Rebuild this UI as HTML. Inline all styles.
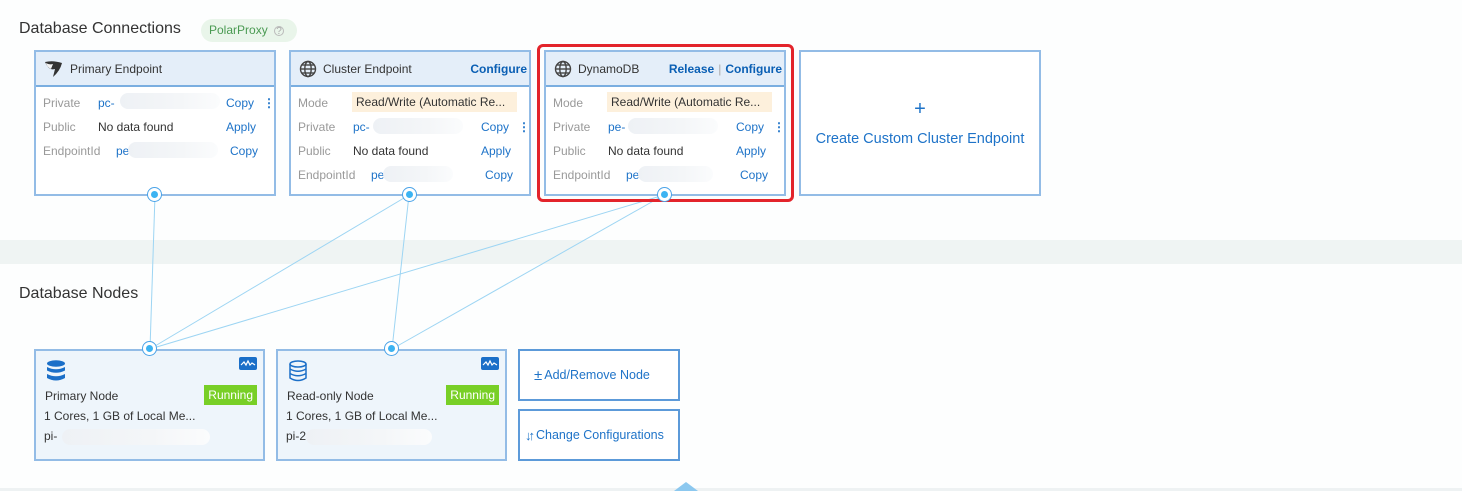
<!DOCTYPE html>
<html><head><meta charset="utf-8"><style>
*{box-sizing:border-box;margin:0;padding:0}
body{width:1462px;height:491px;background:#fdfefe;font-family:"Liberation Sans",sans-serif;font-size:12px;color:#333;position:relative;overflow:hidden}
.abs{position:absolute}
h2{position:absolute;font-weight:normal;font-size:16px;color:#333}
.card{position:absolute;border:2px solid #93bce6;background:#fff}
.hd{height:35px;background:#e4eef9;border-bottom:2px solid #7aaee0;display:flex;align-items:center;padding-left:8px;font-size:12px;color:#333}
.hd .r{margin-left:auto;margin-right:2px;color:#0a5fb4;font-weight:bold}
.row{position:absolute;left:7px;white-space:nowrap;font-size:12px}
.lb{color:#999}
.lk{color:#1e73c8}
.blur{position:absolute;height:16px;border-radius:8px;background:linear-gradient(90deg,#eef1f5,#f4f6f8 60%,#fbfcfd)}
.mode{position:absolute;background:#fdf0dc;height:20px;padding:3px 4px;color:#333}
.dot{position:absolute;width:15px;height:15px;border:1px solid #4aa3e8;border-radius:50%;background:#fff}
.dot:after{content:"";position:absolute;left:3px;top:3px;width:7px;height:7px;border-radius:50%;background:#3cb3f2}
.node{position:absolute;border:2px solid #93bce6;background:#eef5fb;width:231px;height:112px}
.run{position:absolute;right:6px;top:34px;background:#78cf26;color:#fff;padding:3px 4px;font-size:12px}
.mon{position:absolute;right:6px;top:6px;width:18px;height:13px;background:#1b6fc8;border-radius:2px}
.btn{position:absolute;border:2px solid #5c9ad9;background:#fff;color:#1e73c8;font-size:12.5px;display:flex;align-items:center;padding-left:6px}
</style></head><body>
<h2 style="left:19px;top:20px">Database Connections</h2>
<div class="abs" style="left:201px;top:19px;width:96px;height:23px;border-radius:12px;background:#e9f5ea;color:#4a9a52;font-size:12px;padding:4px 8px">PolarProxy <span style="color:#aaa;font-size:10px;border:1px solid #bbb;border-radius:50%;display:inline-block;width:10px;height:10px;line-height:9px;text-align:center;margin-left:3px">?</span></div>
<div class="abs" style="left:0;top:240px;width:1462px;height:24px;background:#eff4f3"></div>
<h2 style="left:19px;top:285px">Database Nodes</h2>
<div class="abs" style="left:0;top:488px;width:1462px;height:3px;background:#eef2f3"></div>
<div class="abs" style="left:674px;top:482px;width:0;height:0;border-left:12px solid transparent;border-right:12px solid transparent;border-bottom:9px solid #8cc8ef"></div>

<svg class="abs" style="left:0;top:0" width="1462" height="491"><g stroke="#9dd5f3" stroke-width="1" fill="none">
<line x1="155" y1="195" x2="150" y2="349"/><line x1="409" y1="195" x2="150" y2="349"/><line x1="409" y1="195" x2="392" y2="349"/><line x1="664" y1="195" x2="150" y2="349"/><line x1="664" y1="195" x2="392" y2="349"/></g></svg>

<!-- primary endpoint -->
<div class="card" style="left:34px;top:50px;width:242px;height:146px">
<div class="hd"><svg width="20" height="18" viewBox="0 0 20 18" style="margin-right:6px"><path d="M1 2 Q9 0 18 3 Q16 11 9 17 L11 9 Q7 10 5 8 Q3 6 1 2Z" fill="#333"/><path d="M2 3 Q5 5 9 4 L7 9 Q3 7 2 3Z" fill="#f4f4f4"/></svg>Primary Endpoint</div>
<div class="row" style="top:44px"><span class="lb">Private</span><span class="lk" style="position:absolute;left:55px">pc-</span><span class="lk" style="position:absolute;left:183px">Copy</span><span class="lk" style="position:absolute;left:220px;font-weight:bold">⋮</span></div>
<div class="blur" style="left:84px;top:41px;width:100px"></div>
<div class="row" style="top:68px"><span class="lb">Public</span><span style="position:absolute;left:55px">No data found</span><span class="lk" style="position:absolute;left:183px">Apply</span></div>
<div class="row" style="top:92px"><span class="lb">EndpointId</span><span class="lk" style="position:absolute;left:73px">pe</span><span class="lk" style="position:absolute;left:187px">Copy</span></div>
<div class="blur" style="left:92px;top:90px;width:90px"></div>
</div>
<!-- cluster -->
<div class="card" style="left:289px;top:50px;width:242px;height:146px">
<div class="hd"><svg width="18" height="18" viewBox="0 0 18 18" style="margin-right:6px" fill="none" stroke="#444" stroke-width="1.4"><circle cx="9" cy="9" r="7.5"/><ellipse cx="9" cy="9" rx="3.2" ry="7.5"/><line x1="1.5" y1="9" x2="16.5" y2="9"/><line x1="3" y1="5" x2="15" y2="5"/><line x1="3" y1="13" x2="15" y2="13"/></svg>Cluster Endpoint<span class="r">Configure</span></div>
<div class="row" style="top:44px"><span class="lb">Mode</span></div>
<div class="mode" style="left:61px;top:40px;width:165px">Read/Write (Automatic Re...</div>
<div class="row" style="top:68px"><span class="lb">Private</span><span class="lk" style="position:absolute;left:55px">pc-</span><span class="lk" style="position:absolute;left:183px">Copy</span><span class="lk" style="position:absolute;left:220px;font-weight:bold">⋮</span></div>
<div class="blur" style="left:82px;top:66px;width:90px"></div>
<div class="row" style="top:92px"><span class="lb">Public</span><span style="position:absolute;left:55px">No data found</span><span class="lk" style="position:absolute;left:183px">Apply</span></div>
<div class="row" style="top:116px"><span class="lb">EndpointId</span><span class="lk" style="position:absolute;left:73px">pe-</span><span class="lk" style="position:absolute;left:187px">Copy</span></div>
<div class="blur" style="left:92px;top:114px;width:70px"></div>
</div>
<!-- dynamo -->
<div class="abs" style="left:537px;top:44px;width:257px;height:158px;border:3px solid #e3242b;border-radius:6px"></div>
<div class="card" style="left:544px;top:50px;width:242px;height:146px">
<div class="hd"><svg width="18" height="18" viewBox="0 0 18 18" style="margin-right:6px" fill="none" stroke="#444" stroke-width="1.4"><circle cx="9" cy="9" r="7.5"/><ellipse cx="9" cy="9" rx="3.2" ry="7.5"/><line x1="1.5" y1="9" x2="16.5" y2="9"/><line x1="3" y1="5" x2="15" y2="5"/><line x1="3" y1="13" x2="15" y2="13"/></svg>DynamoDB<span class="r"><span>Release</span><span style="color:#aaa;font-weight:normal;margin:0 4px">|</span>Configure</span></div>
<div class="row" style="top:44px"><span class="lb">Mode</span></div>
<div class="mode" style="left:61px;top:40px;width:165px">Read/Write (Automatic Re...</div>
<div class="row" style="top:68px"><span class="lb">Private</span><span class="lk" style="position:absolute;left:55px">pe-</span><span class="lk" style="position:absolute;left:183px">Copy</span><span class="lk" style="position:absolute;left:220px;font-weight:bold">⋮</span></div>
<div class="blur" style="left:82px;top:66px;width:90px"></div>
<div class="row" style="top:92px"><span class="lb">Public</span><span style="position:absolute;left:55px">No data found</span><span class="lk" style="position:absolute;left:183px">Apply</span></div>
<div class="row" style="top:116px"><span class="lb">EndpointId</span><span class="lk" style="position:absolute;left:73px">pe-</span><span class="lk" style="position:absolute;left:187px">Copy</span></div>
<div class="blur" style="left:92px;top:114px;width:75px"></div>
</div>
<!-- create -->
<div class="card" style="left:799px;top:50px;width:242px;height:146px;color:#1e73c8;text-align:center">
<div style="margin-top:47px;font-size:20px;line-height:20px">+</div>
<div style="margin-top:12px;font-size:14.5px">Create Custom Cluster Endpoint</div>
</div>
<div class="dot" style="left:147px;top:187px"></div>
<div class="dot" style="left:402px;top:187px"></div>
<div class="dot" style="left:657px;top:187px"></div>

<!-- nodes -->
<div class="node" style="left:34px;top:349px">
<svg class="abs" style="left:10px;top:9px" width="20" height="22" viewBox="0 0 20 22" fill="#1b6fc8"><ellipse cx="10" cy="3.5" rx="9" ry="3.2"/><path d="M1 7 Q10 11.5 19 7 V10.5 Q10 15 1 10.5Z"/><path d="M1 14 Q10 18.5 19 14 V18 Q10 23 1 18Z"/></svg>
<div class="mon"><svg width="18" height="13"><polyline points="2,8 5,5 7,8 9,4 11,8 13,6 16,8" stroke="#fff" fill="none" stroke-width="1.2"/></svg></div>
<div class="run">Running</div>
<div class="abs" style="left:9px;top:38px">Primary Node</div>
<div class="abs" style="left:8px;top:58px">1 Cores, 1 GB of Local Me...</div>
<div class="abs" style="left:8px;top:78px">pi-</div>
<div class="blur" style="left:26px;top:78px;width:148px"></div>
</div>
<div class="node" style="left:276px;top:349px">
<svg class="abs" style="left:10px;top:9px" width="20" height="22" viewBox="0 0 20 22" fill="none" stroke="#1b6fc8" stroke-width="1.5"><ellipse cx="10" cy="4" rx="8" ry="3"/><path d="M2 4 V18 Q10 23 18 18 V4"/><path d="M2 9 Q10 13.5 18 9"/><path d="M2 13.5 Q10 18 18 13.5"/></svg>
<div class="mon"><svg width="18" height="13"><polyline points="2,8 5,5 7,8 9,4 11,8 13,6 16,8" stroke="#fff" fill="none" stroke-width="1.2"/></svg></div>
<div class="run">Running</div>
<div class="abs" style="left:9px;top:38px">Read-only Node</div>
<div class="abs" style="left:8px;top:58px">1 Cores, 1 GB of Local Me...</div>
<div class="abs" style="left:8px;top:78px">pi-2</div>
<div class="blur" style="left:28px;top:78px;width:126px"></div>
</div>
<div class="dot" style="left:142px;top:341px"></div>
<div class="dot" style="left:384px;top:341px"></div>
<div class="btn" style="left:518px;top:349px;width:162px;height:52px;padding-left:14px"><span style="font-size:15px;margin-right:2px">±</span>Add/Remove Node</div>
<div class="btn" style="left:518px;top:409px;width:162px;height:52px;padding-left:5px"><span style="font-size:13px;letter-spacing:-3px;margin-right:4px">↓↑</span>Change Configurations</div>
</body></html>
